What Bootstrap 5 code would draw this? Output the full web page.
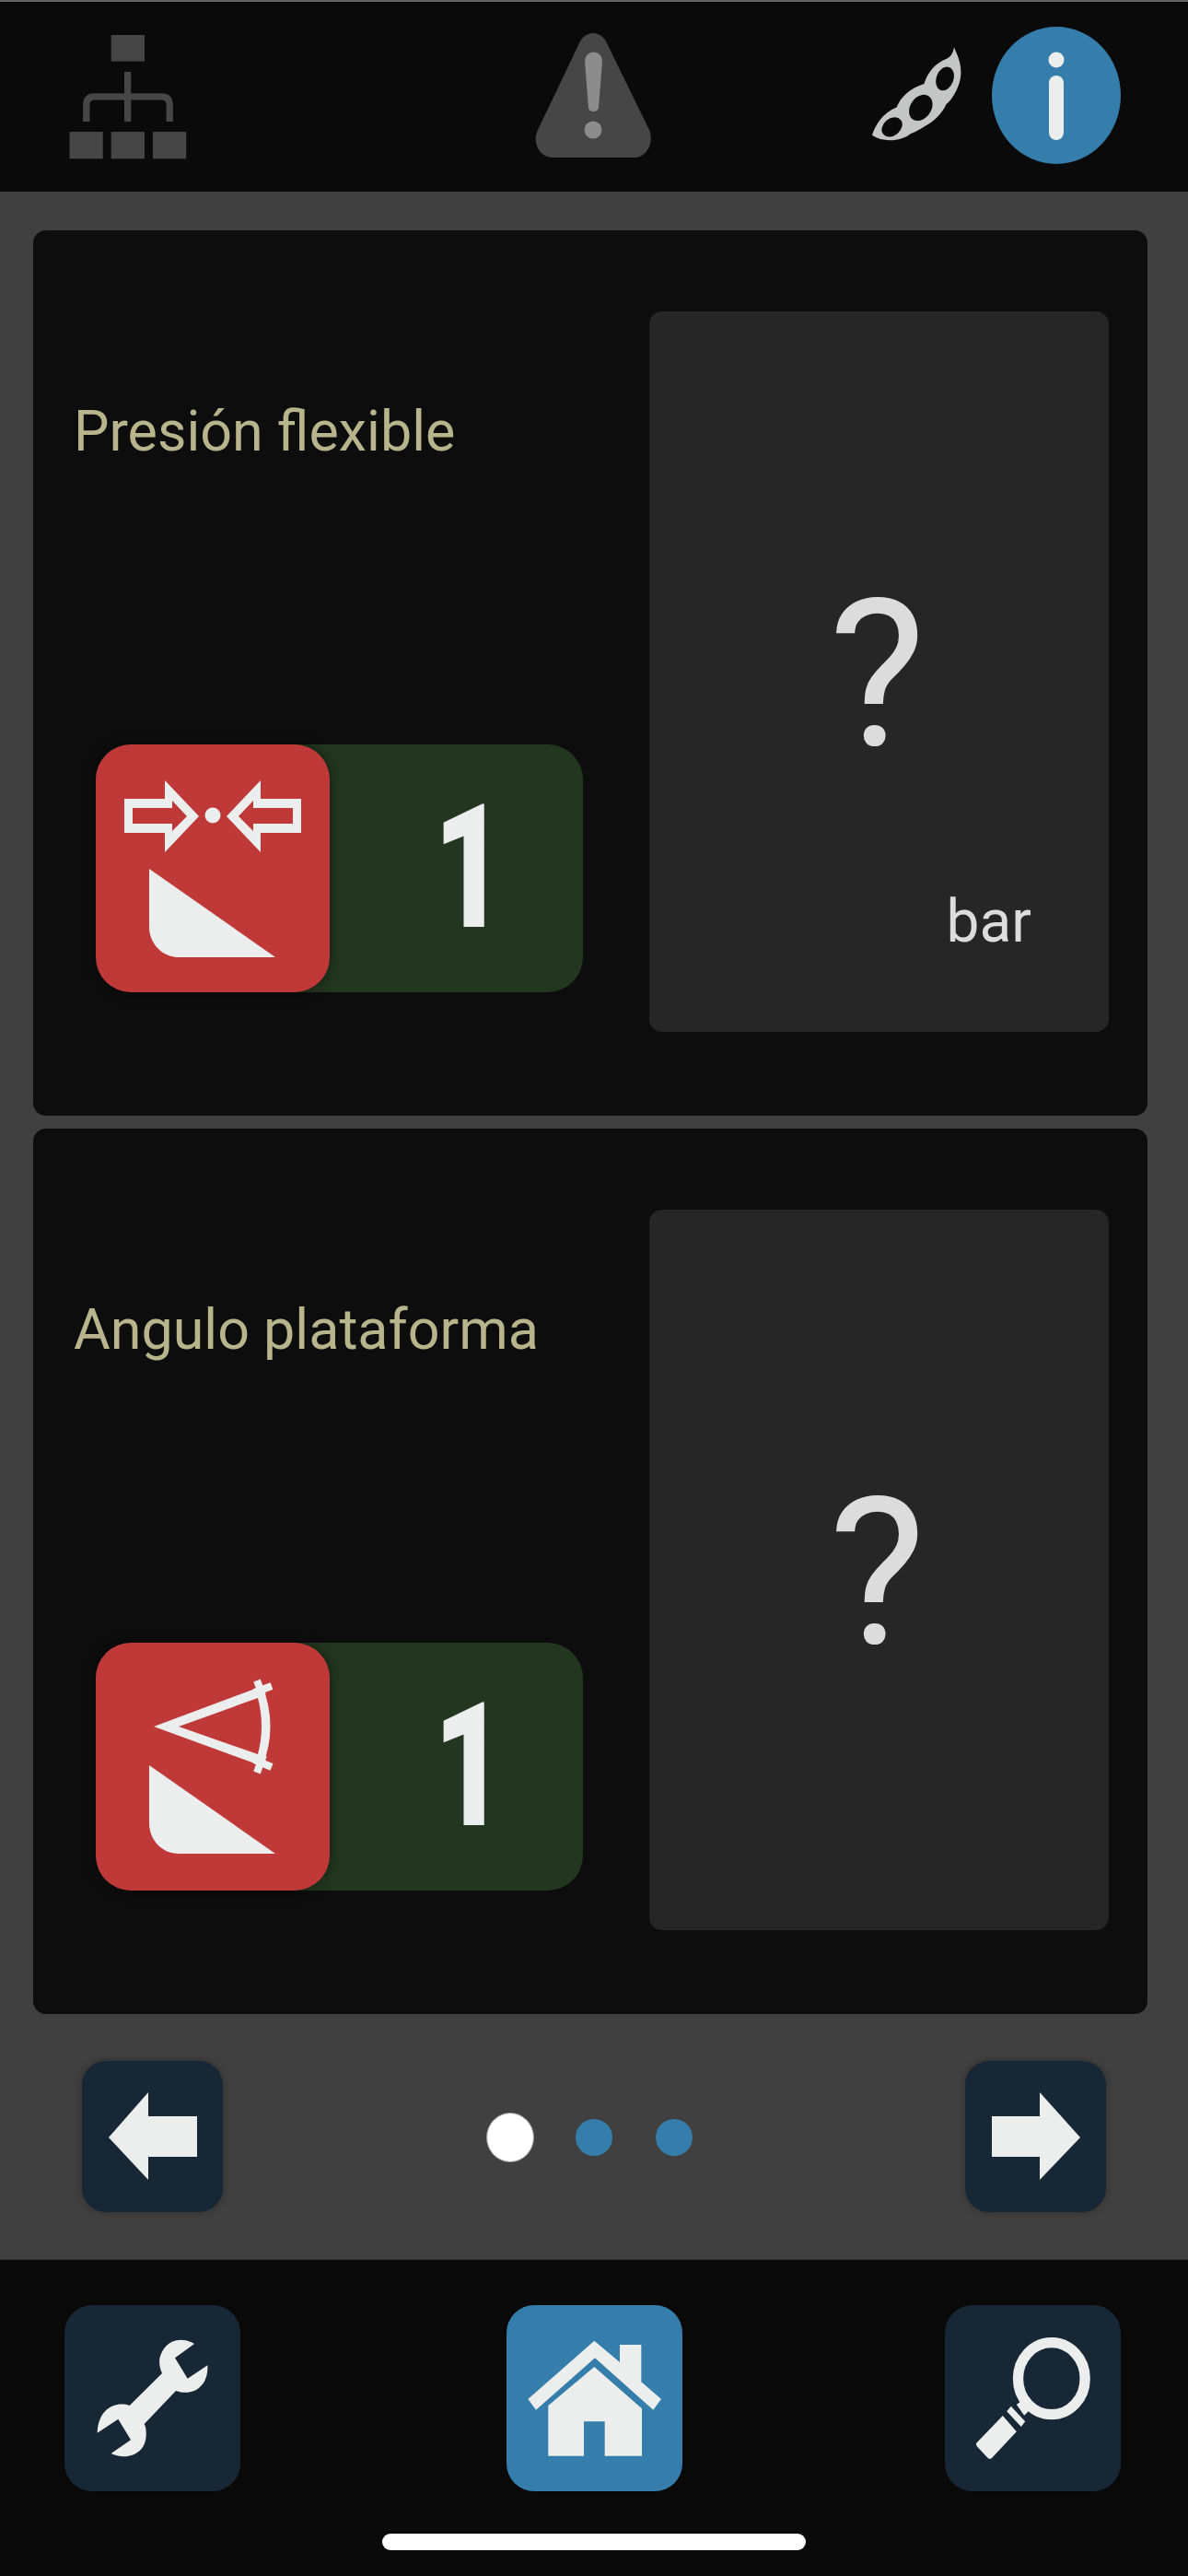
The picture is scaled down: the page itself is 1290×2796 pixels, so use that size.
<!DOCTYPE html>
<html lang="es">
  <head>
    <meta charset="UTF-8" />
    <meta name="viewport" content="width=device-width, initial-scale=1.0" />
    <title>Presión flexible</title>
    <link href="https://cdn.jsdelivr.net/npm/bootstrap@5.3.3/dist/css/bootstrap.min.css" rel="stylesheet" />
    <style>
      body {
        background: #404040;
        font-family: Roboto, 'Liberation Sans', sans-serif;
        width: 1290px;
        height: 2796px;
      }
      svg { display: block; }

      .top-bar {
        height: 208px;
        background: #0a0a0a;
        border-top: 2px solid #666;
        padding: 0 73px 4px 75px;
      }
      .top-side { flex: 1 1 0; }
      .warn-icon { margin-left: -3px; }
      .soy-icon { margin-right: 33px; }

      .card-stack {
        padding: 42px 44px 0 36px;
        gap: 14px;
      }
      .param-card {
        height: 961px;
        background: #0d0d0d;
        border: 0;
        border-radius: 14px;
        padding: 88px 42px 91px 44px;
      }
      .param-left { width: 625px; }
      .param-title {
        color: #b8b48c;
        font-size: 61px;
        font-weight: 400;
        line-height: 76px;
        margin: 92px 0 0;
      }
      .level-box {
        width: 529px;
        height: 269px;
        margin: 0 0 43px 24px;
        background: #233620;
        border-radius: 38px;
      }
      .level-icon {
        width: 254px;
        height: 269px;
        background: #bf3939;
        border-radius: 38px;
        box-shadow: 0 0 14px rgba(0, 0, 0, 0.45);
      }
      .level-num {
        flex: 1;
        padding-left: 40px;
        color: #eceeed;
        font-size: 187px;
        font-weight: 900;
        line-height: 1;
        text-align: center;
        transform: scaleX(0.72);
      }
      .value-panel {
        flex: 1;
        background: #262626;
        border-radius: 14px;
      }
      .value-text {
        color: #dcdcdc;
        font-size: 222px;
        line-height: 1;
        text-align: center;
        margin-top: 284px;
        padding-right: 4px;
      }
      .unit-text {
        color: #dcdcdc;
        font-size: 64px;
        line-height: 1;
        text-align: right;
        padding-right: 84px;
        margin-bottom: 87px;
      }

      .pager-row {
        padding: 51px 89px 0;
      }
      .nav-btn {
        padding: 0;
        border: 0;
        background: #172736;
        box-shadow: 0 0 8px rgba(0, 0, 0, 0.3);
      }
      .nav-btn:hover { background: #172736; }
      .nav-btn-sm {
        width: 153px;
        height: 164px;
        border-radius: 26px;
      }
      .pager-dots {
        gap: 47px;
        margin: 2px 10px 0 0;
      }
      .pager-dot {
        width: 40px;
        height: 40px;
        border-radius: 50%;
        background: #357dab;
      }
      .pager-dot-on {
        width: 50px;
        height: 52px;
        margin-right: -1px;
        background: #fff;
        box-shadow: 0 0 0 1px #999;
      }

      .bottom-bar {
        margin-top: 51px;
        height: 344px;
        background: #0a0a0a;
        border-top: 1px solid #333;
        padding: 49px 73px 0 70px;
      }
      .nav-btn-lg {
        width: 191px;
        height: 202px;
        border-radius: 30px;
      }
      .nav-btn-on,
      .nav-btn-on:hover {
        margin-left: 3px;
        background: #357dab;
      }
      .home-bar {
        width: 460px;
        height: 18px;
        margin: 46px 0 0 345px;
        background: #fff;
        border-radius: 9px;
      }
    </style>
  </head>
  <body>
    <header class="top-bar d-flex align-items-center">
      <div class="top-side d-flex">
        <svg width="128" height="139" viewBox="45 35 384 418" fill="#464646">
          <rect x="182" y="47" width="109" height="86" />
          <rect x="46" y="363" width="109" height="88" />
          <rect x="182" y="363" width="109" height="88" />
          <rect x="318" y="363" width="109" height="88" />
          <rect x="225" y="167" width="22" height="163" />
          <path d="M101 330V275Q101 248 128 248H346Q373 248 373 275V330" fill="none" stroke="#464646" stroke-width="22" />
        </svg>
      </div>
      <svg class="warn-icon" width="127" height="135" viewBox="582 35 127 135">
        <path fill="#464646" d="M645 35C652 35 658 40 661 48L706 140C712 155 702 170 690 170H601C588 170 578 155 585 140L629 48C632 40 638 35 645 35Z" />
        <path fill="#8c8c8c" d="M636 65A9.5 9.5 0 0 1 655 65L651 116A5.5 4 0 0 1 640 116Z" />
        <ellipse fill="#8c8c8c" cx="645" cy="140" rx="9.5" ry="9.5" />
      </svg>
      <div class="top-side d-flex justify-content-end align-items-center">
        <svg class="soy-icon" width="97" height="105" viewBox="80 125 292 315">
          <path fill="#c4c6c5" d="M348 125C358 150 372 175 370 215C368 250 345 295 322 312C315 330 290 365 250 385C235 395 215 405 205 408C180 430 120 440 80 413C90 380 115 340 160 322C175 285 205 260 250 245C262 205 290 175 325 162C340 155 345 140 348 125Z" />
          <ellipse fill="#0a0a0a" cx="318" cy="228" rx="28" ry="40" transform="rotate(20 318 228)" />
          <ellipse fill="#0a0a0a" cx="239" cy="323" rx="34" ry="46" transform="rotate(35 239 323)" />
          <ellipse fill="#0a0a0a" cx="145" cy="386" rx="28" ry="37" transform="rotate(50 145 386)" />
        </svg>
        <svg width="140" height="149" viewBox="0 0 140 149">
          <ellipse fill="#357dab" cx="70" cy="74.5" rx="70" ry="74.5" />
          <circle fill="#eceeed" cx="70" cy="36" r="8.5" />
          <rect fill="#eceeed" x="62" y="53" width="16" height="70" rx="8" />
        </svg>
      </div>
    </header>

    <main class="card-stack d-flex flex-column">
      <section class="card param-card flex-row">
        <div class="param-left d-flex flex-column justify-content-between">
          <h2 class="param-title">Presión flexible</h2>
          <div class="level-box d-flex align-items-center">
            <div class="level-icon">
              <svg width="254" height="269" viewBox="0 0 254 269" fill="#eceeed">
                <path fill-rule="evenodd" d="M31 59H75V39L112 78L75 117V96H31ZM40 69V86H83V94L99 78L83 61V69Z" />
                <path fill-rule="evenodd" d="M223 59H179V39L142 78L179 117V96H223ZM214 69V86H171V94L155 78L171 61V69Z" />
                <circle cx="127" cy="77" r="8.5" />
                <path d="M58 135L195 231H90C72 231 58 216 58 198Z" />
              </svg>
            </div>
            <div class="level-num">1</div>
          </div>
        </div>
        <div class="value-panel d-flex flex-column">
          <div class="value-text">?</div>
          <div class="unit-text mt-auto">bar</div>
        </div>
      </section>

      <section class="card param-card flex-row">
        <div class="param-left d-flex flex-column justify-content-between">
          <h2 class="param-title">Angulo plataforma</h2>
          <div class="level-box d-flex align-items-center">
            <div class="level-icon">
              <svg width="254" height="269" viewBox="0 0 254 269" fill="#eceeed">
                <path fill-rule="evenodd" d="M63 91L181 47Q198 91 181 134ZM90 91L176 121Q184 91 176 60Z" />
                <path d="M175 41L181 57M172 54L191 47M172 127L191 135M182 122L175 141" stroke="#eceeed" stroke-width="8" fill="none" />
                <path d="M58 133L195 229H90C72 229 58 214 58 196Z" />
              </svg>
            </div>
            <div class="level-num">1</div>
          </div>
        </div>
        <div class="value-panel d-flex flex-column">
          <div class="value-text">?</div>
        </div>
      </section>
    </main>

    <div class="pager-row d-flex justify-content-between align-items-center">
      <button class="btn nav-btn nav-btn-sm" type="button" aria-label="Anterior">
        <svg width="153" height="164" viewBox="0 0 153 164" fill="#eceeed"><path d="M29 83L72 34V60H125V104H72V129Z" /></svg>
      </button>
      <div class="pager-dots d-flex align-items-center">
        <span class="pager-dot pager-dot-on"></span>
        <span class="pager-dot"></span>
        <span class="pager-dot"></span>
      </div>
      <button class="btn nav-btn nav-btn-sm" type="button" aria-label="Siguiente">
        <svg width="153" height="164" viewBox="0 0 153 164" fill="#eceeed"><path d="M125 83L81 34V60H29V104H81V129Z" /></svg>
      </button>
    </div>

    <footer class="bottom-bar">
      <div class="d-flex justify-content-between">
        <button class="btn nav-btn nav-btn-lg" type="button" aria-label="Servicio">
          <svg width="191" height="202" viewBox="3 6 567 606" fill="#eceeed">
            <path d="M423 132C385 108 325 115 310 180C308 200 312 215 318 228L212 333C170 318 110 340 107 422L175 377L216 445L152 489C190 510 270 500 266 420C266 410 264 400 260 393L363 285C420 305 470 270 466 202L401 245L360 178Z" />
          </svg>
        </button>
        <button class="btn nav-btn nav-btn-lg nav-btn-on" type="button" aria-label="Inicio">
          <svg width="191" height="202" viewBox="12 6 573 606" fill="#eceeed">
            <path d="M298 122L381 192V135H451V256L516 312L490 347L300 178L108 347L82 312Z" />
            <path d="M298 207L453 343V497H332V385H264V497H148V333Z" />
          </svg>
        </button>
        <button class="btn nav-btn nav-btn-lg" type="button" aria-label="Buscar">
          <svg width="191" height="202" viewBox="18 6 570 606" fill="#eceeed">
            <ellipse cx="364" cy="245" rx="109" ry="117" fill="none" stroke="#eceeed" stroke-width="34" />
            <path d="M250 330L262 320L290 350L275 365Z" />
            <path d="M232 335L278 385L265 402L218 352Z" />
            <path d="M205 366L250 418L170 503Q163 510 156 503L122 467Q115 458 122 452Z" />
          </svg>
        </button>
      </div>
      <div class="home-bar"></div>
    </footer>

    <script src="https://cdn.jsdelivr.net/npm/bootstrap@5.3.3/dist/js/bootstrap.bundle.min.js"></script>
  </body>
</html>
